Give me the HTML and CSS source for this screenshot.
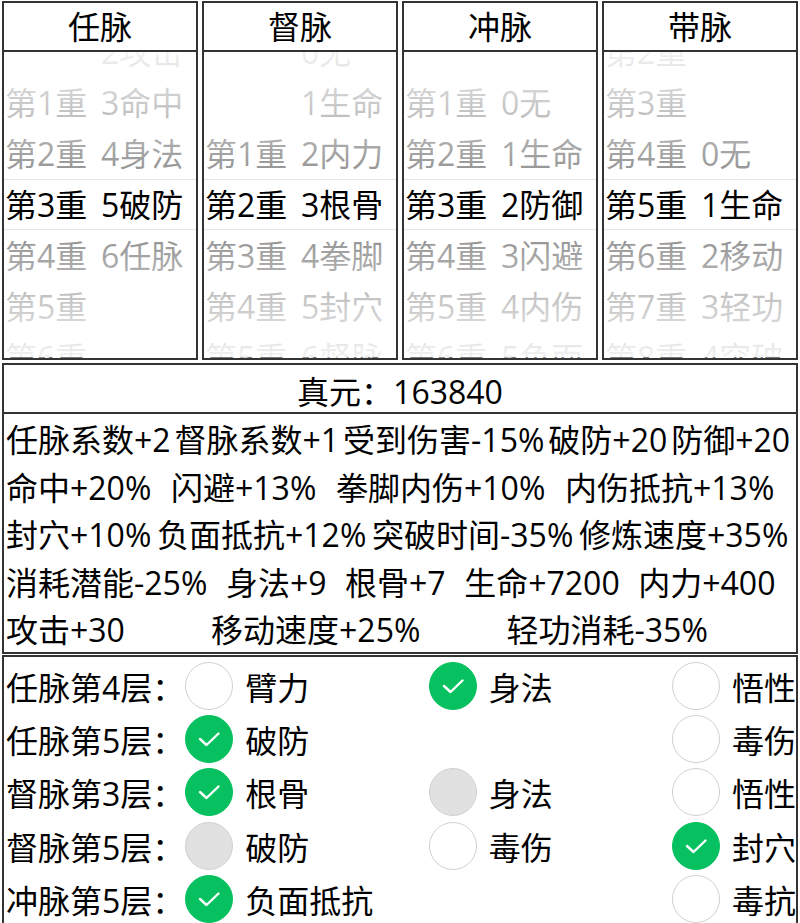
FILE: index.html
```html
<!DOCTYPE html>
<html lang="zh-CN">
<head>
<meta charset="utf-8">
<title>经脉</title>
<link rel="stylesheet" href="styles.css">
</head>
<body>
<div class="page">
  <div class="pickers">
    <div class="picker-box">
      <div class="picker-title">任脉</div>
      <div class="picker">
        <div class="wheel">
          <div class="col">
            <div class="item"></div><div class="item">第1重</div><div class="item">第2重</div><div class="item">第3重</div><div class="item">第4重</div><div class="item">第5重</div><div class="item">第6重</div>
          </div>
          <div class="col">
            <div class="item">2攻击</div><div class="item">3命中</div><div class="item">4身法</div><div class="item">5破防</div><div class="item">6任脉</div><div class="item"></div><div class="item"></div>
          </div>
        </div>
        <div class="mask"></div>
        <div class="indicator"></div>
      </div>
    </div>
    <div class="picker-box">
      <div class="picker-title">督脉</div>
      <div class="picker">
        <div class="wheel">
          <div class="col">
            <div class="item"></div><div class="item"></div><div class="item">第1重</div><div class="item">第2重</div><div class="item">第3重</div><div class="item">第4重</div><div class="item">第5重</div>
          </div>
          <div class="col">
            <div class="item">0无</div><div class="item">1生命</div><div class="item">2内力</div><div class="item">3根骨</div><div class="item">4拳脚</div><div class="item">5封穴</div><div class="item">6督脉</div>
          </div>
        </div>
        <div class="mask"></div>
        <div class="indicator"></div>
      </div>
    </div>
    <div class="picker-box">
      <div class="picker-title">冲脉</div>
      <div class="picker">
        <div class="wheel">
          <div class="col">
            <div class="item"></div><div class="item">第1重</div><div class="item">第2重</div><div class="item">第3重</div><div class="item">第4重</div><div class="item">第5重</div><div class="item">第6重</div>
          </div>
          <div class="col">
            <div class="item"></div><div class="item">0无</div><div class="item">1生命</div><div class="item">2防御</div><div class="item">3闪避</div><div class="item">4内伤</div><div class="item">5负面</div>
          </div>
        </div>
        <div class="mask"></div>
        <div class="indicator"></div>
      </div>
    </div>
    <div class="picker-box">
      <div class="picker-title">带脉</div>
      <div class="picker">
        <div class="wheel">
          <div class="col">
            <div class="item">第2重</div><div class="item">第3重</div><div class="item">第4重</div><div class="item">第5重</div><div class="item">第6重</div><div class="item">第7重</div><div class="item">第8重</div>
          </div>
          <div class="col">
            <div class="item"></div><div class="item"></div><div class="item">0无</div><div class="item">1生命</div><div class="item">2移动</div><div class="item">3轻功</div><div class="item">4突破</div>
          </div>
        </div>
        <div class="mask"></div>
        <div class="indicator"></div>
      </div>
    </div>
  </div>

  <div class="stats">
    <div class="stats-title">真元：163840</div>
    <div class="stats-body">
      <div class="stat-line"><span class="stat">任脉系数+2</span><span class="stat">督脉系数+1</span><span class="stat">受到伤害-15%</span><span class="stat">破防+20</span><span class="stat">防御+20</span></div>
      <div class="stat-line"><span class="stat">命中+20%</span><span class="stat">闪避+13%</span><span class="stat">拳脚内伤+10%</span><span class="stat">内伤抵抗+13%</span></div>
      <div class="stat-line"><span class="stat">封穴+10%</span><span class="stat">负面抵抗+12%</span><span class="stat">突破时间-35%</span><span class="stat">修炼速度+35%</span></div>
      <div class="stat-line"><span class="stat">消耗潜能-25%</span><span class="stat">身法+9</span><span class="stat">根骨+7</span><span class="stat">生命+7200</span><span class="stat">内力+400</span></div>
      <div class="stat-line"><span class="stat">攻击+30</span><span class="stat">移动速度+25%</span><span class="stat">轻功消耗-35%</span></div>
    </div>
  </div>

  <div class="choices">
    <div class="cb-row">
      <div class="cb-label">任脉第4层：</div>
      <div class="cb-options">
        <div class="opt"><span class="circle"></span><span class="opt-text">臂力</span></div>
        <div class="opt"><span class="circle checked"><svg viewBox="0 0 48 48" width="48" height="48"><polyline points="15,24 21.5,30 33.5,18.5" /></svg></span><span class="opt-text">身法</span></div>
        <div class="opt"><span class="circle"></span><span class="opt-text">悟性</span></div>
      </div>
    </div>
    <div class="cb-row">
      <div class="cb-label">任脉第5层：</div>
      <div class="cb-options">
        <div class="opt"><span class="circle checked"><svg viewBox="0 0 48 48" width="48" height="48"><polyline points="15,24 21.5,30 33.5,18.5" /></svg></span><span class="opt-text">破防</span></div>
        <div class="opt"><span class="circle"></span><span class="opt-text">毒伤</span></div>
      </div>
    </div>
    <div class="cb-row">
      <div class="cb-label">督脉第3层：</div>
      <div class="cb-options">
        <div class="opt"><span class="circle checked"><svg viewBox="0 0 48 48" width="48" height="48"><polyline points="15,24 21.5,30 33.5,18.5" /></svg></span><span class="opt-text">根骨</span></div>
        <div class="opt"><span class="circle disabled"></span><span class="opt-text">身法</span></div>
        <div class="opt"><span class="circle"></span><span class="opt-text">悟性</span></div>
      </div>
    </div>
    <div class="cb-row">
      <div class="cb-label">督脉第5层：</div>
      <div class="cb-options">
        <div class="opt"><span class="circle disabled"></span><span class="opt-text">破防</span></div>
        <div class="opt"><span class="circle"></span><span class="opt-text">毒伤</span></div>
        <div class="opt"><span class="circle checked"><svg viewBox="0 0 48 48" width="48" height="48"><polyline points="15,24 21.5,30 33.5,18.5" /></svg></span><span class="opt-text">封穴</span></div>
      </div>
    </div>
    <div class="cb-row">
      <div class="cb-label">冲脉第5层：</div>
      <div class="cb-options">
        <div class="opt"><span class="circle checked"><svg viewBox="0 0 48 48" width="48" height="48"><polyline points="15,24 21.5,30 33.5,18.5" /></svg></span><span class="opt-text">负面抵抗</span></div>
        <div class="opt"><span class="circle"></span><span class="opt-text">毒抗</span></div>
      </div>
    </div>
  </div>
</div>
</body>
</html>
```
FILE: styles.css
```css
html, body {
  margin: 0;
  padding: 0;
  background: #fff;
}
body {
  font-family: "Open Sans", "Noto Sans CJK SC", sans-serif;
  font-size: 32px;
  color: #000;
}
.page {
  box-sizing: border-box;
  height: 923px;
  padding: 1px 2px 0;
  display: flex;
  flex-direction: column;
  overflow: hidden;
}
.pickers {
  display: flex;
  gap: 4px;
  margin-bottom: 3px;
}
.picker-box {
  flex: 1 1 0;
  border: 2px solid #333;
  min-width: 0;
}
.picker-title {
  box-sizing: border-box;
  height: 48.5px;
  padding-top: 2px;
  line-height: 44px;
  text-align: center;
  border-bottom: 2px solid #333;
  white-space: nowrap;
}
.picker {
  position: relative;
  height: 306px;
  overflow: hidden;
}
.wheel {
  display: flex;
  margin-top: -25.5px;
}
.col {
  flex: 1 1 0;
  min-width: 0;
}
.item {
  height: 51px;
  line-height: 51px;
  padding-left: 1px;
  white-space: nowrap;
  overflow: hidden;
}
.mask {
  position: absolute;
  inset: 0;
  background-image:
    linear-gradient(180deg, rgba(255,255,255,.95), rgba(255,255,255,.56)),
    linear-gradient(0deg, rgba(255,255,255,.95), rgba(255,255,255,.56));
  background-position: top, bottom;
  background-size: 100% 127.5px;
  background-repeat: no-repeat;
}
.indicator {
  position: absolute;
  left: 0;
  right: 0;
  top: 127.5px;
  height: 51px;
  box-sizing: border-box;
  border-top: 1px solid #e5e5e5;
  border-bottom: 1px solid #e5e5e5;
}
.stats {
  border: 2px solid #333;
  margin-bottom: 1px;
}
.stats-title {
  box-sizing: border-box;
  height: 49.5px;
  padding-top: 4px;
  line-height: 45px;
  text-align: center;
  border-bottom: 2px solid #333;
}
.stats-body {
  padding: 0 2px;
}
.stat-line {
  box-sizing: border-box;
  display: flex;
  height: 47.6px;
  padding-top: 4px;
  line-height: 44px;
  white-space: nowrap;
}
.stat {
  flex: 1 1 auto;
}
.choices {
  flex: 1 1 auto;
  border: 2px solid #333;
  border-bottom: none;
  padding: 2px 0 0 2px;
  overflow: hidden;
}
.cb-row {
  display: flex;
  align-items: center;
  height: 53.3px;
}
.cb-label {
  flex: none;
  white-space: nowrap;
}
.cb-options {
  flex: 1 1 auto;
  display: flex;
  justify-content: space-between;
  margin-left: 1px;
  min-width: 0;
}
.opt {
  display: flex;
  align-items: center;
  gap: 12px;
  white-space: nowrap;
}
.circle {
  width: 48px;
  height: 48px;
  box-sizing: border-box;
  border-radius: 50%;
  border: 1.5px solid #d1d1d1;
  background: #fff;
  display: flex;
  align-items: center;
  justify-content: center;
  flex: none;
}
.circle.checked {
  background: #07c160;
  border-color: #07c160;
}
.circle.disabled {
  background: #e1e1e1;
  border-color: #d1d1d1;
}
.circle svg {
  display: block;
  flex: none;
}
.circle polyline {
  fill: none;
  stroke: #fff;
  stroke-width: 2.4;
  stroke-linecap: round;
  stroke-linejoin: round;
}
```
